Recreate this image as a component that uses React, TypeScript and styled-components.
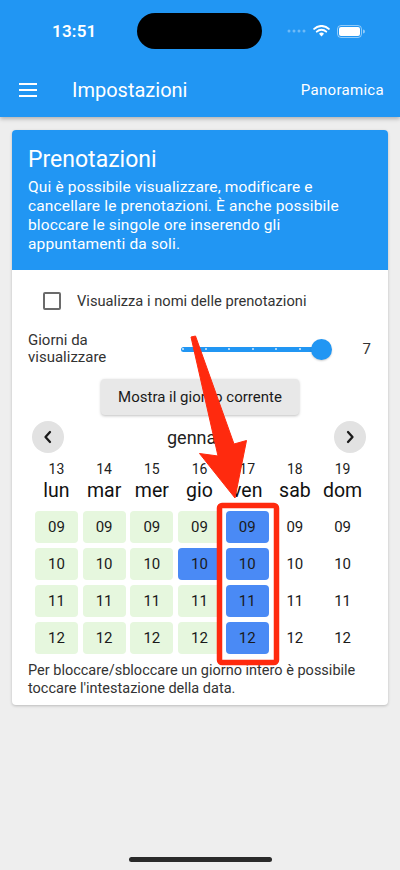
import React from "react";
import styled, { createGlobalStyle } from "styled-components";

const BLUE = "#2196F3";
const RED = "#FF2A0E";

const GlobalStyle = createGlobalStyle`
  html, body { margin: 0; padding: 0; background: #eeeeee; }
  body { font-family: Roboto, "Liberation Sans", sans-serif; color: #222; }
  * { box-sizing: border-box; }
`;

const Page = styled.div`
  position: relative;
  width: 400px;
  height: 870px;
  overflow: hidden;
  background: #eeeeee;
  display: flex;
  flex-direction: column;
`;

const Header = styled.header`
  background: ${BLUE};
  color: #fff;
  box-shadow: 0 2px 4px rgba(0, 0, 0, 0.25);
  position: relative;
  z-index: 1;
`;

const StatusBar = styled.div`
  height: 62px;
  display: flex;
  align-items: center;
  padding: 0 35px 0 52px;
`;

const Time = styled.span`
  font-size: 17px;
  font-weight: 600;
  width: 85px;
  letter-spacing: 0.2px;
`;

const Island = styled.div`
  width: 125px;
  height: 36px;
  border-radius: 18px;
  background: #000;
`;

const StatusIcons = styled.div`
  margin-left: auto;
  display: flex;
  align-items: center;
  gap: 7px;
`;

const AppBar = styled.div`
  height: 55px;
  display: flex;
  align-items: center;
  padding: 0 16px 0 19px;
`;

const Title = styled.h1`
  margin: 0 0 0 35px;
  font-size: 20px;
  font-weight: 400;
  flex: 1;
`;

const Action = styled.span`
  font-size: 15px;
  font-weight: 400;
  letter-spacing: 0.3px;
`;

const Card = styled.section`
  margin: 13px 12px 0;
  background: #fff;
  border-radius: 4px;
  overflow: hidden;
  box-shadow: 0 1px 3px rgba(0, 0, 0, 0.22);
`;

const CardHead = styled.div`
  background: ${BLUE};
  color: #fff;
  padding: 15px 16px 16px;
`;

const CardTitle = styled.h2`
  margin: 0;
  font-size: 23px;
  font-weight: 400;
  line-height: 30px;
`;

const CardText = styled.p`
  margin: 3px 0 0;
  font-size: 15.5px;
  line-height: 19px;
  letter-spacing: 0.15px;
`;

const CardBody = styled.div`
  padding: 20px 16px 7px;
  display: flex;
  flex-direction: column;
`;

const CheckRow = styled.label`
  height: 22px;
  display: flex;
  align-items: center;
  padding-left: 15px;
  gap: 16px;
  font-size: 14.7px;
  color: #333;
`;

const Box = styled.span`
  width: 18px;
  height: 18px;
  border: 2px solid #6b6b6b;
  border-radius: 2px;
`;

const SliderRow = styled.div`
  margin-top: 20px;
  display: flex;
  align-items: center;
`;

const SliderLabel = styled.div`
  width: 153px;
  font-size: 15px;
  line-height: 17px;
  color: #333;
`;

const Track = styled.div`
  position: relative;
  width: 141px;
  height: 5px;
  border-radius: 3px;
  background: ${BLUE};
`;

const Tick = styled.span`
  position: absolute;
  top: 1.5px;
  width: 2px;
  height: 2px;
  border-radius: 1px;
  background: rgba(255, 255, 255, 0.8);
`;

const Thumb = styled.span`
  position: absolute;
  right: -10px;
  top: -8px;
  width: 21px;
  height: 21px;
  border-radius: 50%;
  background: ${BLUE};
  box-shadow: 0 1px 2px rgba(0, 0, 0, 0.2);
`;

const SliderValue = styled.span`
  flex: 1;
  text-align: right;
  font-size: 15px;
  color: #333;
  padding-right: 1px;
`;

const TodayButton = styled.button`
  align-self: center;
  margin-top: 13px;
  width: 198px;
  height: 36px;
  border: none;
  border-radius: 4px;
  background: #e8e8e8;
  box-shadow: 0 1px 3px rgba(0, 0, 0, 0.25);
  font-family: inherit;
  font-size: 15px;
  color: #1a1a1a;
`;

const MonthRow = styled.div`
  margin-top: 6px;
  height: 32px;
  display: flex;
  align-items: center;
  justify-content: space-between;
  padding: 0 6px 0 4px;
`;

const NavButton = styled.span`
  width: 32px;
  height: 32px;
  border-radius: 50%;
  background: #e2e2e2;
  display: flex;
  align-items: center;
  justify-content: center;
`;

const Month = styled.span`
  font-size: 18px;
  color: #222;
`;

const Grid = styled.div`
  display: grid;
  grid-template-columns: repeat(7, 43px);
  column-gap: 4.7px;
  justify-content: center;
  margin-left: -1px;
`;

const DayHead = styled(Grid)`
  margin-top: 7px;
`;

const DayCell = styled.div`
  display: flex;
  flex-direction: column;
  align-items: center;
`;

const DayNum = styled.span`
  font-size: 14px;
  line-height: 18px;
  color: #222;
`;

const DayName = styled.span`
  font-size: 19.5px;
  line-height: 25px;
  color: #111;
  white-space: nowrap;
`;

const Slots = styled(Grid)`
  margin-top: 8px;
  row-gap: 5px;
`;

const Slot = styled.div<{ $kind: "free" | "busy" | "none" }>`
  height: 32px;
  border-radius: 4px;
  display: flex;
  align-items: center;
  justify-content: center;
  font-size: 15px;
  color: #1a1a1a;
  background: ${(p) =>
    p.$kind === "free" ? "#e6f7de" : p.$kind === "busy" ? "#4a8af5" : "transparent"};
`;

const Footer = styled.p`
  margin: 8px 0 0;
  font-size: 14.5px;
  line-height: 18px;
  color: #333;
`;

const HomeBar = styled.div`
  margin: auto auto 8px;
  width: 143px;
  height: 5px;
  border-radius: 3px;
  background: #2a2a2a;
`;

const Overlay = styled.svg`
  position: absolute;
  left: 0;
  top: 0;
  pointer-events: none;
  z-index: 5;
`;

const days = [
  { n: 13, d: "lun" },
  { n: 14, d: "mar" },
  { n: 15, d: "mer" },
  { n: 16, d: "gio" },
  { n: 17, d: "ven" },
  { n: 18, d: "sab" },
  { n: 19, d: "dom" },
];
const hours = ["09", "10", "11", "12"];

const kindOf = (h: string, col: number): "free" | "busy" | "none" => {
  if (col === 4) return "busy";
  if (col === 3 && h === "10") return "busy";
  if (col < 4) return "free";
  return "none";
};

const Wifi = () => (
  <svg width="17" height="12" viewBox="0 0 17 12">
    <path d="M8.5 11.5 L6 8.8 A3.6 3.6 0 0 1 11 8.8 Z" fill="#fff" />
    <path d="M3.8 6.6 A6.7 6.7 0 0 1 13.2 6.6" stroke="#fff" strokeWidth="2" fill="none" strokeLinecap="round" />
    <path d="M1.2 3.9 A10.5 10.5 0 0 1 15.8 3.9" stroke="#fff" strokeWidth="2" fill="none" strokeLinecap="round" />
  </svg>
);

const Battery = () => (
  <svg width="28" height="13" viewBox="0 0 28 13">
    <rect x="0.5" y="0.5" width="24" height="12" rx="3.5" fill="none" stroke="rgba(255,255,255,0.5)" />
    <rect x="2" y="2" width="21" height="9" rx="2" fill="#fff" />
    <path d="M26 4.5 v4 a2 2 0 0 0 0 -4z" fill="rgba(255,255,255,0.5)" />
  </svg>
);

const Dots = () => (
  <svg width="19" height="4" viewBox="0 0 19 4">
    {[2, 7, 12, 17].map((x) => (
      <circle key={x} cx={x} cy="2" r="1.5" fill="rgba(255,255,255,0.35)" />
    ))}
  </svg>
);

const Menu = () => (
  <svg width="18" height="14" viewBox="0 0 18 14">
    <rect y="0" width="18" height="2" fill="#fff" />
    <rect y="6" width="18" height="2" fill="#fff" />
    <rect y="12" width="18" height="2" fill="#fff" />
  </svg>
);

const Chevron = ({ left }: { left?: boolean }) => (
  <svg width="10" height="14" viewBox="0 0 10 14">
    <path
      d={left ? "M7 2 L2.5 7 L7 12" : "M3 2 L7.5 7 L3 12"}
      stroke="#1a1a1a"
      strokeWidth="2.3"
      fill="none"
      strokeLinecap="round"
      strokeLinejoin="round"
    />
  </svg>
);

export default function App() {
  return (
    <>
      <GlobalStyle />
      <Page>
        <Header>
          <StatusBar>
            <Time>13:51</Time>
            <Island />
            <StatusIcons>
              <Dots />
              <Wifi />
              <Battery />
            </StatusIcons>
          </StatusBar>
          <AppBar>
            <Menu />
            <Title>Impostazioni</Title>
            <Action>Panoramica</Action>
          </AppBar>
        </Header>

        <Card>
          <CardHead>
            <CardTitle>Prenotazioni</CardTitle>
            <CardText>
              Qui è possibile visualizzare, modificare e cancellare le prenotazioni. È anche
              possibile bloccare le singole ore inserendo gli appuntamenti da soli.
            </CardText>
          </CardHead>
          <CardBody>
            <CheckRow>
              <Box />
              Visualizza i nomi delle prenotazioni
            </CheckRow>
            <SliderRow>
              <SliderLabel>
                Giorni da
                <br />
                visualizzare
              </SliderLabel>
              <Track>
                {[0, 1, 2, 3, 4, 5].map((i) => (
                  <Tick key={i} style={{ left: 0.5 + i * 23.4 }} />
                ))}
                <Thumb />
              </Track>
              <SliderValue>7</SliderValue>
            </SliderRow>
            <TodayButton>Mostra il giorno corrente</TodayButton>
            <MonthRow>
              <NavButton>
                <Chevron left />
              </NavButton>
              <Month>gennaio</Month>
              <NavButton>
                <Chevron />
              </NavButton>
            </MonthRow>
            <DayHead>
              {days.map((d) => (
                <DayCell key={d.n}>
                  <DayNum>{d.n}</DayNum>
                  <DayName>{d.d}</DayName>
                </DayCell>
              ))}
            </DayHead>
            <Slots>
              {hours.map((h) =>
                days.map((d, col) => (
                  <Slot key={h + d.n} $kind={kindOf(h, col)}>
                    {h}
                  </Slot>
                ))
              )}
            </Slots>
            <Footer>
              Per bloccare/sbloccare un giorno intero è possibile toccare l'intestazione della
              data.
            </Footer>
          </CardBody>
        </Card>

        <HomeBar />

        <Overlay width="400" height="870" viewBox="0 0 400 870">
          <rect x="219.5" y="505.5" width="57" height="157" rx="2.5" fill="none" stroke={RED} strokeWidth="5.5" />
          <polygon
            points="191,337 195.5,336 234,444 246.5,440.5 235,498 199.5,453.5 218,456"
            fill={RED}
            strokeLinejoin="round"
            stroke={RED}
            strokeWidth="1"
          />
        </Overlay>
      </Page>
    </>
  );
}
